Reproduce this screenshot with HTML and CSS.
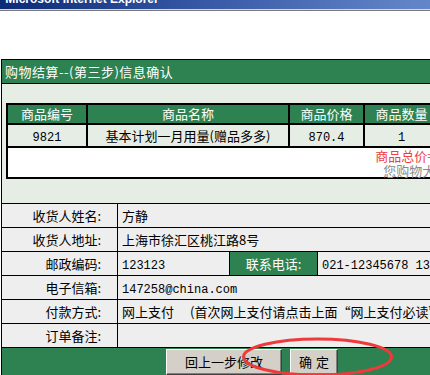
FILE: index.html
```html
<!DOCTYPE html>
<html lang="zh-CN">
<head>
<meta charset="utf-8">
<title>购物结算</title>
<link rel="stylesheet" href="styles.css">
</head>
<body>
<div class="titlebar"><span class="title">- Microsoft Internet Explorer</span></div>
<div class="page">
  <div class="panel">
    <div class="panel-head">购物结算--(第三步)信息确认</div>
    <div class="panel-body">
      <div class="goods">
        <div class="th">商品编号</div>
        <div class="th">商品名称</div>
        <div class="th">商品价格</div>
        <div class="th">商品数量</div>
        <div class="th">小计</div>
        <div class="td"><span class="num">9821</span></div>
        <div class="td">基本计划一月用量(赠品多多)</div>
        <div class="td"><span class="num">870.4</span></div>
        <div class="td"><span class="num">1</span></div>
        <div class="td"><span class="num">870.4</span></div>
        <div class="total">
          <p class="sum">商品总价=870.4元</p>
          <p class="hint">您购物大于500元</p>
        </div>
      </div>
    </div>
    <div class="info">
      <div class="row"><div class="label">收货人姓名:</div><div class="value">方静</div></div>
      <div class="row"><div class="label">收货人地址:</div><div class="value">上海市徐汇区桃江路8号</div></div>
      <div class="row"><div class="label">邮政编码:</div><div class="value short"><span class="num">123123</span></div><div class="label green">联系电话:</div><div class="value"><span class="num">021-12345678 13912345678</span></div></div>
      <div class="row"><div class="label">电子信箱:</div><div class="value"><span class="num">147258@china.com</span></div></div>
      <div class="row"><div class="label">付款方式:</div><div class="value">网上支付<span class="note">(首次网上支付请点击上面“网上支付必读”)</span></div></div>
      <div class="row"><div class="label">订单备注:</div><div class="value"></div></div>
    </div>
    <div class="foot">
      <button class="btn wide" type="button">回上一步修改</button>
      <button class="btn" type="button">确<span class="gap"></span>定</button>
    </div>
  </div>
</div>
<svg class="mark" width="430" height="375" viewBox="0 0 430 375" aria-hidden="true">
  <ellipse cx="317.5" cy="357" rx="74" ry="18" fill="none" stroke="#ee3a3a" stroke-width="3"/>
</svg>
</body>
</html>
```
FILE: styles.css
```css
* { box-sizing: border-box; }
html, body {
  margin: 0;
  overflow: hidden;
  background: #fff;
}
body {
  width: 620px;
  height: 375px;
  position: relative;
  font-family: "Noto Sans CJK SC", sans-serif;
  font-size: 13px;
  color: #000;
}
p { margin: 0; }

.titlebar {
  height: 10px;
  overflow: hidden;
  background: linear-gradient(to right, #0c2a76 0%, #3a5ca8 35%, #5f82c6 65%, #86a6da 100%);
  border-bottom: 1px solid #d8d8d8;
  box-shadow: 0 1px 0 #7a7a7a;
}
.title {
  display: block;
  font: bold 12px/12px "Liberation Sans", sans-serif;
  color: #fff;
  margin: -7px 0 0 -2px;
  white-space: nowrap;
}

.page { margin-top: 49px; }

.panel {
  margin-left: 1px;
  width: 501px;
  border-left: 1px solid #000;
}
.panel-head {
  height: 25px;
  line-height: 23px;
  padding-left: 3px;
  background: #2e8251;
  color: #fff;
  border-top: 1px solid #000;
  border-bottom: 1px solid #000;
  white-space: nowrap;
  letter-spacing: 0.5px;
}
.panel-body {
  background: #e5ede5;
  padding: 19px 4px 24px 4px;
}

.goods {
  display: grid;
  grid-template-columns: 78px 200px 73px 73px 56px;
  grid-template-rows: 18px 21px 29px;
  gap: 2px;
  padding: 2px;
  background: #000;
}
.th {
  background: #2e8251;
  color: #fff;
  text-align: center;
  line-height: 18px;
  white-space: nowrap;
}
.td {
  background: #e5ede5;
  text-align: center;
  line-height: 21px;
  white-space: nowrap;
}
.total {
  grid-column: 1 / -1;
  background: #fff;
  text-align: right;
  line-height: 15px;
}
.sum { color: #f03c3c; padding-right: 16px; }
.hint { color: #8a8a8a; padding-right: 13px; }

.num {
  font-family: "Liberation Mono", monospace;
  font-size: 12px;
}

.info {
  background: #eee;
  border-top: 1px solid #000;
}
.row {
  display: flex;
  height: 24px;
  line-height: 23px;
  border-bottom: 1px solid #000;
  white-space: nowrap;
}
.label {
  flex: 0 0 116px;
  border-right: 1px solid #000;
  text-align: right;
  padding-right: 16px;
}
.value {
  flex: 1;
  padding-left: 4px;
  overflow: hidden;
}
.value.short {
  flex: 0 0 112px;
  border-right: 1px solid #000;
}
.label.green {
  flex: 0 0 88px;
  background: #2e8251;
  color: #fff;
  text-align: center;
  padding: 0;
}
.note { margin-left: 16px; }

.foot {
  display: flex;
  justify-content: center;
  gap: 8px;
  height: 40px;
  padding-top: 1px;
  background: #2e8251;
}
.btn {
  width: 48px;
  height: 26px;
  padding: 0;
  font-family: "Noto Sans CJK SC", sans-serif;
  font-size: 13px;
  line-height: 24px;
  color: #000;
  background: #d4d0c8;
  border: 1px solid;
  border-color: #fff #404040 #404040 #fff;
  box-shadow: inset -1px -1px 0 #808080;
  border-radius: 0;
}
.btn.wide { width: 116px; }
.gap {
  display: inline-block;
  width: 4px;
}

.mark {
  position: absolute;
  left: 0;
  top: 0;
  pointer-events: none;
}
```
